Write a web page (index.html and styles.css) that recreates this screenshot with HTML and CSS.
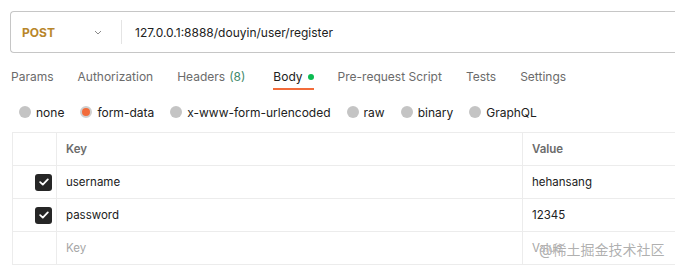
FILE: index.html
```html
<!DOCTYPE html>
<html>
<head>
<meta charset="utf-8">
<link rel="stylesheet" href="styles.css">
</head>
<body>
<div class="page">
  <div class="urlbar">
    <div class="method">
      <span class="method-name">POST</span>
      <svg class="chev" width="8" height="5" viewBox="0 0 8 5"><path d="M1 1 L4 4 L7 1" fill="none" stroke="#8a8a8a" stroke-width="1"/></svg>
    </div>
    <div class="divider"></div>
    <div class="url">127.0.0.1:8888/douyin/user/register</div>
  </div>

  <div class="tabs">
    <span class="tab">Params</span>
    <span class="tab">Authorization</span>
    <span class="tab">Headers <span class="count">(8)</span></span>
    <span class="tab active">Body <span class="dot"></span></span>
    <span class="tab">Pre-request Script</span>
    <span class="tab">Tests</span>
    <span class="tab">Settings</span>
  </div>

  <div class="radios">
    <span class="radio"><span class="circle"></span>none</span>
    <span class="radio"><span class="circle on"></span>form-data</span>
    <span class="radio"><span class="circle"></span>x-www-form-urlencoded</span>
    <span class="radio"><span class="circle"></span>raw</span>
    <span class="radio"><span class="circle"></span>binary</span>
    <span class="radio"><span class="circle"></span>GraphQL</span>
  </div>

  <div class="table">
    <div class="row head">
      <div class="cell chk"></div>
      <div class="cell key">Key</div>
      <div class="cell val">Value</div>
    </div>
    <div class="row">
      <div class="cell chk"><span class="box"><svg width="10" height="8" viewBox="0 0 10 8"><path d="M1.2 4.2 L3.8 6.6 L8.8 1.4" fill="none" stroke="#fff" stroke-width="1.8" stroke-linecap="round" stroke-linejoin="round"/></svg></span></div>
      <div class="cell key">username</div>
      <div class="cell val">hehansang</div>
    </div>
    <div class="row">
      <div class="cell chk"><span class="box"><svg width="10" height="8" viewBox="0 0 10 8"><path d="M1.2 4.2 L3.8 6.6 L8.8 1.4" fill="none" stroke="#fff" stroke-width="1.8" stroke-linecap="round" stroke-linejoin="round"/></svg></span></div>
      <div class="cell key">password</div>
      <div class="cell val">12345</div>
    </div>
    <div class="row">
      <div class="cell chk"></div>
      <div class="cell key ph">Key</div>
      <div class="cell val ph">Value<span class="watermark">@稀土掘金技术社区</span></div>
    </div>
  </div>
</div>
</body>
</html>
```
FILE: styles.css
```css
html, body {
  margin: 0;
  padding: 0;
  background: #ffffff;
}
body {
  font-family: Inter, "Noto Sans CJK SC", sans-serif;
  font-size: 12px;
  color: #212121;
  width: 675px;
  height: 267px;
  overflow: hidden;
}
.page {
  padding-top: 11px;
}
.urlbar {
  margin-left: 10px;
  height: 40px;
  border: 1px solid #c6c6c6;
  border-right: none;
  border-radius: 4px 0 0 4px;
  display: flex;
  align-items: center;
}
.method {
  width: 110px;
  padding-left: 11px;
  box-sizing: border-box;
  display: flex;
  align-items: center;
  justify-content: space-between;
  padding-right: 19px;
}
.method-name {
  color: #b8862a;
  font-weight: 700;
  font-size: 12px;
}
.chev {
  display: block;
}
.divider {
  width: 1px;
  height: 24px;
  background: #e4e4e4;
}
.url {
  padding-left: 13px;
  font-size: 12px;
  color: #212121;
}
.tabs {
  display: flex;
  gap: 24px;
  margin-left: 11px;
  margin-top: 12px;
  height: 25px;
}
.tab {
  color: #6b6b6b;
  font-size: 12px;
  position: relative;
  display: flex;
  align-items: center;
  height: 23px;
}
.tab .count {
  color: #3f8a6c;
  margin-left: 4px;
}
.tab.active {
  color: #212121;
  border-bottom: 2px solid #f26b3a;
  margin-left: 4px;
}
.dot {
  width: 6px;
  height: 6px;
  border-radius: 50%;
  background: #0cbb52;
  margin-left: 5px;
  display: inline-block;
}
.radios {
  display: flex;
  gap: 16px;
  margin-left: 19px;
  margin-top: 10px;
  height: 24px;
  align-items: center;
}
.radio {
  display: flex;
  align-items: center;
  gap: 5px;
  color: #212121;
  font-size: 12px;
}
.circle {
  width: 12px;
  height: 12px;
  border-radius: 50%;
  background: #c4c4c4;
  box-sizing: border-box;
}
.circle.on {
  background: #f26b3a;
  border: 2.5px solid #cfcfcf;
}
.table {
  margin-left: 12px;
  margin-top: 8px;
  border: 1px solid #ececec;
  border-right: none;
}
.row {
  display: flex;
  height: 32px;
  border-top: 1px solid #ececec;
}
.row.head {
  border-top: none;
}
.cell {
  display: flex;
  align-items: center;
  padding-left: 9px;
  box-sizing: border-box;
  font-size: 11.5px;
  color: #212121;
}
.cell.chk {
  width: 44px;
  padding-left: 0;
  justify-content: flex-end;
  padding-right: 4px;
  border-right: 1px solid #ececec;
}
.cell.key {
  width: 466px;
  border-right: 1px solid #ececec;
}
.cell.val {
  flex: 1;
  position: relative;
}
.head .cell {
  color: #6b6b6b;
  font-weight: 600;
}
.cell.ph {
  color: #a6a6a6;
}
.box {
  width: 17px;
  height: 17px;
  border-radius: 3px;
  background: #262626;
  display: flex;
  align-items: center;
  justify-content: center;
}
.watermark {
  position: absolute;
  left: 16px;
  top: 7px;
  font-size: 14px;
  color: rgba(150, 150, 150, 0.75);
  text-shadow: 0 0 1px #fff;
  white-space: nowrap;
}
```
